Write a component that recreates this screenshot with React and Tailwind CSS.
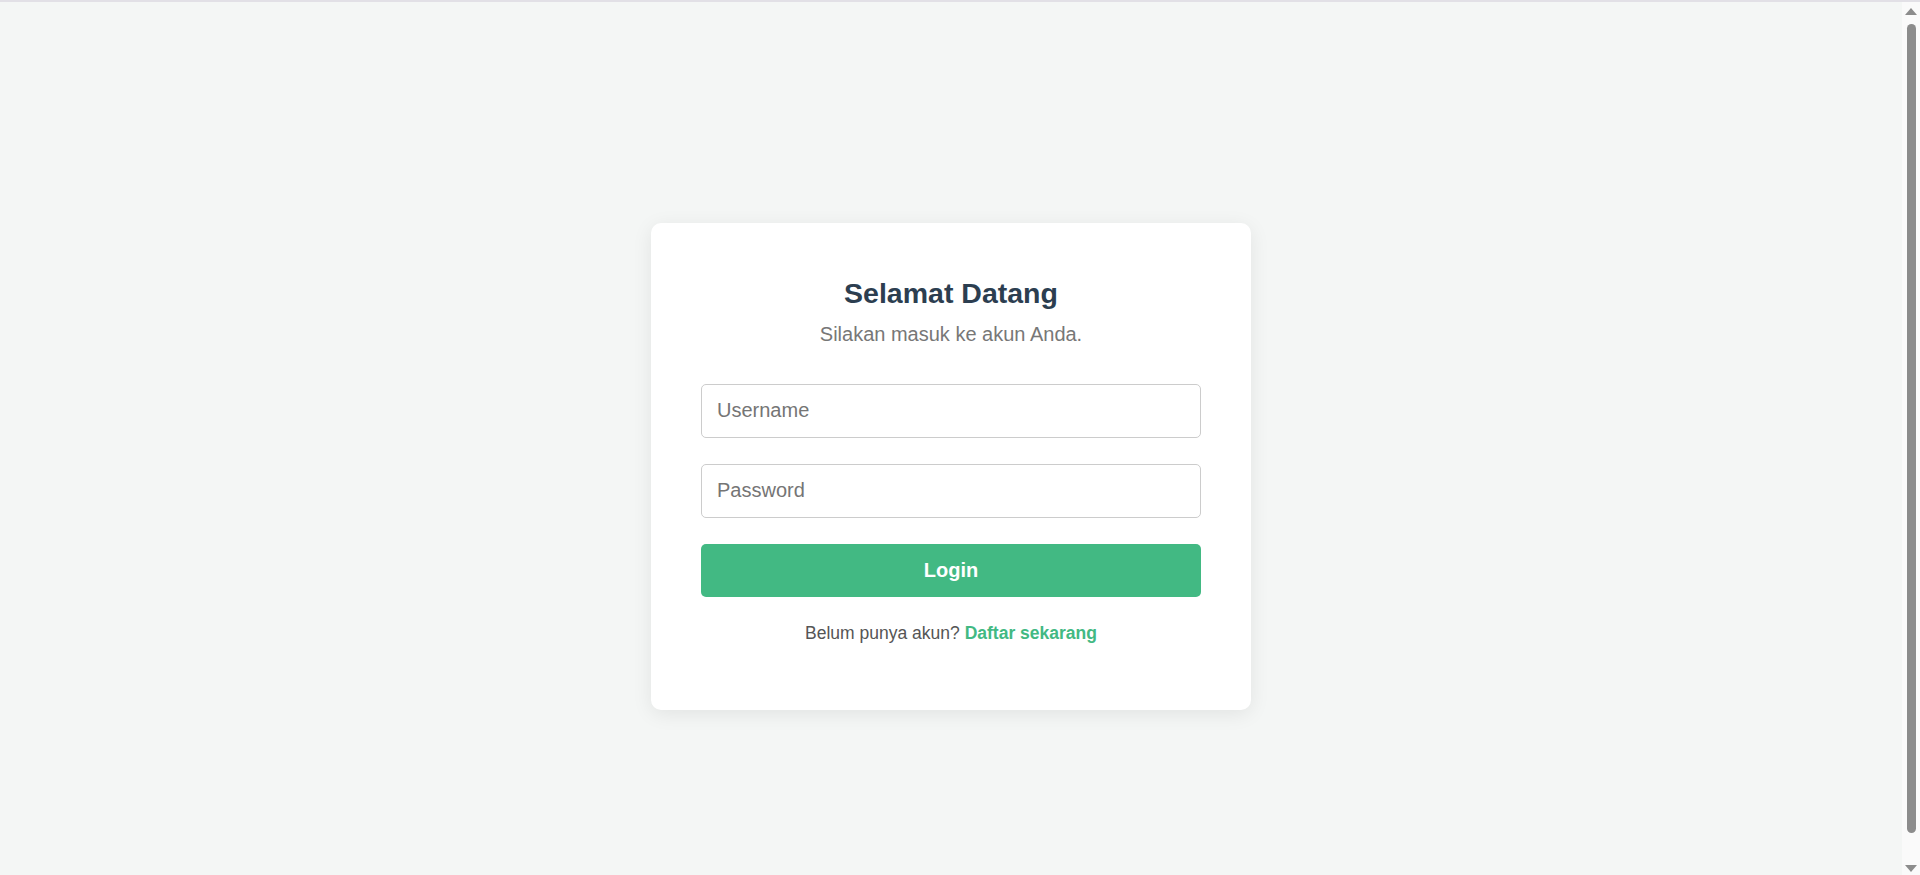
export default function App() {
  return (
    <div className="h-screen overflow-hidden bg-[#f4f6f5] font-['Liberation_Sans',Arial,sans-serif] flex flex-col">
      <div className="h-[2px] shrink-0 bg-[#e2e0e6]" />
      <div className="flex flex-1 min-h-0">
        <main className="flex-1 pt-[55px] flex items-center justify-center">
          <div className="w-[600px] bg-white rounded-[10px] shadow-[0_4px_20px_rgba(0,0,0,0.08)] px-[50px] pt-[54px] pb-[67px]">
            <h2 className="text-[28.5px] leading-[32px] font-bold text-[#2c3e50] text-center">Selamat Datang</h2>
            <p className="mt-[14px] text-[20px] leading-[23px] text-[#777] text-center">Silakan masuk ke akun Anda.</p>

            <form className="mt-[38px] flex flex-col gap-[26px]" onSubmit={(e) => e.preventDefault()}>
              <input
                type="text"
                placeholder="Username"
                className="h-[54px] w-full border border-[#ccc] rounded-[5px] px-[15px] text-[20px] text-[#333] placeholder:text-[#757575] outline-none"
              />
              <input
                type="password"
                placeholder="Password"
                className="h-[54px] w-full border border-[#ccc] rounded-[5px] px-[15px] text-[20px] text-[#333] placeholder:text-[#757575] outline-none"
              />
              <button
                type="submit"
                className="h-[53px] w-full bg-[#42b983] rounded-[5px] text-white text-[20px] font-bold"
              >
                Login
              </button>
            </form>

            <p className="mt-[26px] text-[17.5px] leading-[20px] text-[#555] text-center">
              Belum punya akun?{" "}
              <a href="#" className="font-bold text-[#42b983]">Daftar sekarang</a>
            </p>
          </div>
        </main>

        {/* scrollbar as seen in the screenshot */}
        <aside className="w-[18px] shrink-0 bg-[#fafafa] flex flex-col items-center pt-[6px] pb-[3px]">
          <svg width="12" height="7" viewBox="0 0 12 7">
            <path d="M6 0L12 7H0z" fill="#8c8c8c" />
          </svg>
          <div className="mt-[9px] h-[809px] w-[9px] rounded-full bg-[#8c8c8c]" />
          <svg width="12" height="7" viewBox="0 0 12 7" className="mt-auto">
            <path d="M0 0H12L6 7z" fill="#8c8c8c" />
          </svg>
        </aside>
      </div>
    </div>
  );
}
